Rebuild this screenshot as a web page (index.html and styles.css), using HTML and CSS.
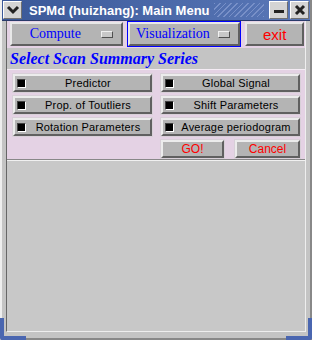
FILE: index.html
```html
<!DOCTYPE html>
<html lang="en">
<head>
  <meta charset="UTF-8">
  <title>SPMd (huizhang): Main Menu</title>
  <link rel="stylesheet" href="styles.css">
</head>
<body>
  <div class="window">
    <!-- title bar -->
    <div class="titlebar">
      <div class="tb-btn menu-btn">
        <svg width="14" height="10" viewBox="0 0 14 10"><path d="M2 2 L7 7 L12 2" fill="none" stroke="#222" stroke-width="3"/></svg>
      </div>
      <div class="title">SPMd (huizhang): Main Menu</div>
      <div class="stripes"></div>
      <div class="tb-btn">
        <svg width="12" height="12" viewBox="0 0 12 12"><rect x="1" y="6" width="10" height="3" fill="#222"/></svg>
      </div>
      <div class="tb-btn">
        <svg width="12" height="12" viewBox="0 0 12 12"><path d="M2 2 L10 10 M10 2 L2 10" stroke="#222" stroke-width="3"/></svg>
      </div>
    </div>

    <div class="client">
      <!-- menu row -->
      <div class="menubar">
        <button class="mbtn wide">Compute <span class="ind"></span></button>
        <button class="mbtn wide focus">Visualization <span class="ind"></span></button>
        <button class="mbtn exit">exit</button>
      </div>

      <div class="label">Select Scan Summary Series</div>

      <div class="panel">
        <div class="grid">
          <button class="cb"><span class="box"></span><span class="txt">Predictor</span></button>
          <button class="cb"><span class="box"></span><span class="txt">Global Signal</span></button>
          <button class="cb"><span class="box"></span><span class="txt">Prop. of Toutliers</span></button>
          <button class="cb"><span class="box"></span><span class="txt">Shift Parameters</span></button>
          <button class="cb"><span class="box"></span><span class="txt">Rotation Parameters</span></button>
          <button class="cb"><span class="box"></span><span class="txt">Average periodogram</span></button>
          <div></div>
          <div class="actions">
            <button class="act go">GO!</button>
            <button class="act cancel">Cancel</button>
          </div>
        </div>
      </div>

      <div class="rest"></div>
    </div>
    <div class="corner left"></div>
    <div class="corner right"></div>
  </div>
</body>
</html>
```
FILE: styles.css
```css
body {
  margin: 0;
  background: #c8c8c8;
}
.window {
  position: relative;
  width: 312px;
  height: 340px;
  box-sizing: border-box;
  display: flex;
  flex-direction: column;
  background: #c4c4c4;
  border-left: 2px solid #eeeeee;
  border-right: 2px solid #888888;
  border-bottom: 2px solid #888888;
  font-family: "Liberation Sans", Arial, sans-serif;
}
.titlebar {
  height: 20px;
  display: flex;
  align-items: center;
  background: linear-gradient(to right, #3a5898, #5a78b8);
  border-bottom: 1px solid #2a3a6a;
}
.tb-btn {
  width: 19px;
  height: 18px;
  margin: 0 1px;
  background: #d4d4d4;
  border: 1px solid;
  border-color: #ffffff #707070 #707070 #ffffff;
  box-sizing: border-box;
  display: flex;
  align-items: center;
  justify-content: center;
}
.menu-btn {
  margin-left: 1px;
}
.title {
  color: #ffffff;
  font-weight: bold;
  font-size: 13px;
  padding-left: 6px;
  white-space: nowrap;
}
.stripes {
  flex: 1;
  align-self: stretch;
  margin: 3px 4px;
  background: repeating-linear-gradient(135deg, #7890c8 0 1px, transparent 1px 4px);
}
.client {
  flex: 1;
  display: flex;
  flex-direction: column;
  margin: 0 4px 6px;
  border-left: 1px solid #666;
  border-right: 1px solid #eee;
  border-bottom: 1px solid #eee;
  background: #c8c8c8;
}
.menubar {
  display: flex;
  gap: 5px;
  padding: 1px 1px 2px 3px;
  background: #e4d2e4;
}
.mbtn {
  height: 24px;
  display: flex;
  align-items: center;
  justify-content: center;
  position: relative;
  background: #b4b4b4;
  border: 2px solid;
  border-color: #e8e8e8 #606060 #606060 #e8e8e8;
  font-family: "Liberation Serif", "Times New Roman", serif;
  font-size: 14px;
  color: #0000ff;
  padding: 0;
}
.mbtn.wide {
  width: 113px;
  padding-right: 22px;
}
.mbtn.focus {
  outline: 1px solid #0000ff;
  outline-offset: 0;
}
.mbtn .ind {
  position: absolute;
  right: 8px;
  top: 7px;
  width: 10px;
  height: 5px;
  background: #c8c8c8;
  border: 1px solid;
  border-color: #f0f0f0 #505050 #505050 #f0f0f0;
}
.mbtn.exit {
  width: 59px;
  font-family: "Liberation Sans", Arial, sans-serif;
  color: #ff0000;
  font-size: 15px;
}
.label {
  height: 21px;
  line-height: 21px;
  padding-left: 3px;
  font-family: "Liberation Serif", "Times New Roman", serif;
  font-style: italic;
  font-weight: bold;
  font-size: 16px;
  color: #0000ff;
  background: #c4c4c4;
}
.panel {
  background: #e4d2e4;
  border-top: 1px solid #f4ecf4;
  border-bottom: 1px solid #888;
  padding: 4px 6px 1px 6px;
}
.grid {
  display: grid;
  grid-template-columns: 139px 139px;
  column-gap: 9px;
  row-gap: 4px;
}
.cb, .act {
  height: 18px;
  display: flex;
  align-items: center;
  background: #b4b4b4;
  border: 2px solid;
  border-color: #ececec #606060 #606060 #ececec;
  outline: 1px solid #d8d0d8;
  font-family: "Liberation Sans", Arial, sans-serif;
  font-size: 11px;
  color: #000;
  padding: 0 0 0 2px;
}
.cb .box {
  width: 7px;
  height: 7px;
  background: #000;
  border: 1px solid;
  border-color: #404040 #ffffff #ffffff #404040;
}
.cb .txt {
  flex: 1;
  text-align: center;
  letter-spacing: 0.2px;
}
.actions {
  display: flex;
  justify-content: space-between;
}
.act {
  justify-content: center;
  color: #ff0000;
  font-size: 12px;
  padding: 0;
}
.act.go {
  width: 63px;
}
.act.cancel {
  width: 65px;
}
.rest {
  flex: 1;
  border-top: 1px solid #f0f0f0;
}
.corner {
  position: absolute;
  bottom: -2px;
  width: 22px;
  height: 18px;
  border-bottom: 4px solid #4a66b0;
}
.corner.left {
  left: -2px;
  border-left: 4px solid #4a66b0;
  border-bottom-left-radius: 3px;
}
.corner.right {
  right: -2px;
  border-right: 4px solid #4a66b0;
  border-bottom-right-radius: 3px;
}
```
